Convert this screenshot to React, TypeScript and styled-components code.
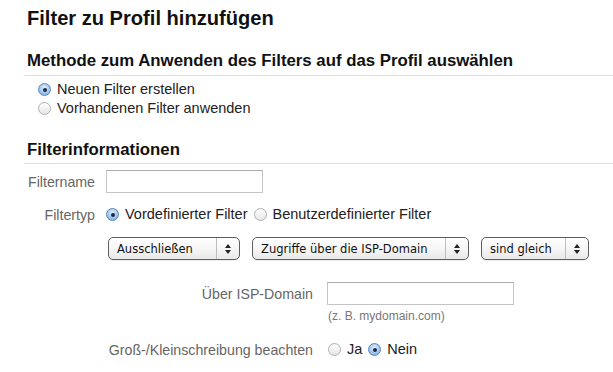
import React from "react";
import styled, { createGlobalStyle } from "styled-components";

const Global = createGlobalStyle`
  html, body { margin: 0; padding: 0; background: #fff; }
  body { font-family: "Liberation Sans", Arial, sans-serif; color: #222; }
`;

const Page = styled.div`
  width: 613px;
  height: 372px;
  overflow: hidden;
  padding: 7px 0 0 24px;
  box-sizing: border-box;
`;

const Title = styled.h1`
  margin: 0 0 0 3px;
  font-size: 20.1px;
  font-weight: bold;
  line-height: 22px;
  color: #111;
`;

const SectionHead = styled.h2<{ $top: number; $pb: number }>`
  margin: ${(p) => p.$top}px 0 0 0;
  padding: 0 0 ${(p) => p.$pb}px 3px;
  font-size: 16.8px;
  font-weight: bold;
  line-height: 20px;
  color: #111;
  border-bottom: 1px solid #dcdcdc;
`;

const RadioList = styled.div`
  display: flex;
  flex-direction: column;
  align-items: flex-start;
  gap: 2px;
  padding: 5px 0 0 14px;
`;

const RadioLabel = styled.label`
  display: inline-flex;
  align-items: center;
  gap: 6px;
  font-size: 14.5px;
  line-height: 17px;
  color: #222;
  margin-right: 6px;
`;

const Circle = styled.span<{ $on?: boolean }>`
  width: 13px;
  height: 13px;
  flex: none;
  border-radius: 50%;
  box-sizing: border-box;
  display: inline-flex;
  align-items: center;
  justify-content: center;
  border: 1px solid ${(p) => (p.$on ? "#5a86c0" : "#b0b0b0")};
  background: ${(p) =>
    p.$on
      ? "radial-gradient(circle at 50% 35%, #e4f0ff 0%, #9cc2ee 60%, #6d9fdc 100%)"
      : "linear-gradient(#ffffff, #e6e6e6)"};
  &::after {
    content: "";
    display: ${(p) => (p.$on ? "block" : "none")};
    width: 4px;
    height: 4px;
    border-radius: 50%;
    background: #1a2a40;
  }
`;

const Radio = ({ on, children }: { on?: boolean; children: React.ReactNode }) => (
  <RadioLabel>
    <Circle $on={on} />
    {children}
  </RadioLabel>
);

const Form = styled.div`
  display: flex;
  flex-direction: column;
`;

const Row = styled.div<{ $top: number; $label: number; $gap: number }>`
  display: grid;
  grid-template-columns: ${(p) => p.$label}px auto;
  column-gap: ${(p) => p.$gap}px;
  align-items: center;
  margin-top: ${(p) => p.$top}px;
`;

const Label = styled.span`
  text-align: right;
  font-size: 14.2px;
  color: #666;
  line-height: 16px;
  white-space: nowrap;
`;

const TextInput = styled.div<{ $w: number }>`
  width: ${(p) => p.$w}px;
  height: 23px;
  box-sizing: border-box;
  border: 1px solid #c4c4c4;
  border-top-color: #aaaaaa;
  background: #fff;
`;

const Inline = styled.div`
  display: flex;
  align-items: center;
`;

const Selects = styled.div`
  display: flex;
  gap: 12px;
  margin: 14px 0 0 84px;
`;

const SelectBox = styled.div<{ $w: number }>`
  width: ${(p) => p.$w}px;
  height: 23px;
  box-sizing: border-box;
  border: 1px solid #5e5e5e;
  border-radius: 5px;
  background: linear-gradient(#ffffff 0%, #f6f6f6 50%, #e9e9e9 100%);
  box-shadow: 0 1px 0 rgba(0, 0, 0, 0.08);
  display: flex;
  align-items: center;
  font-family: "DejaVu Sans", Verdana, sans-serif;
  font-size: 11.5px;
  color: #111;
`;

const SelectText = styled.span`
  flex: 1;
  padding-left: 8px;
  white-space: nowrap;
  overflow: hidden;
`;

const SelectArrows = styled.span`
  width: 22px;
  height: 100%;
  border-left: 1px solid #bdbdbd;
  display: flex;
  align-items: center;
  justify-content: center;
`;

const Select = ({ w, children }: { w: number; children: React.ReactNode }) => (
  <SelectBox $w={w}>
    <SelectText>{children}</SelectText>
    <SelectArrows>
      <svg width="6" height="10" viewBox="0 0 6 10">
        <path d="M3 0 L6 4 H0 Z M0 6 H6 L3 10 Z" fill="#222" />
      </svg>
    </SelectArrows>
  </SelectBox>
);

const Hint = styled.div`
  margin: 4px 0 0 304px;
  font-size: 12px;
  color: #777;
  line-height: 14px;
`;

export default function App() {
  return (
    <>
      <Global />
      <Page>
        <Title>Filter zu Profil hinzufügen</Title>
        <SectionHead $top={22} $pb={4}>
          Methode zum Anwenden des Filters auf das Profil auswählen
        </SectionHead>
        <RadioList>
          <Radio on>Neuen Filter erstellen</Radio>
          <Radio>Vorhandenen Filter anwenden</Radio>
        </RadioList>
        <SectionHead $top={23} $pb={3}>
          Filterinformationen
        </SectionHead>
        <Form>
          <Row $top={6} $label={71} $gap={11}>
            <Label>Filtername</Label>
            <TextInput $w={157} />
          </Row>
          <Row $top={13} $label={71} $gap={11}>
            <Label>Filtertyp</Label>
            <Inline>
              <Radio on>Vordefinierter Filter</Radio>
              <Radio>Benutzerdefinierter Filter</Radio>
            </Inline>
          </Row>
          <Selects>
            <Select w={132}>Ausschließen</Select>
            <Select w={217}>Zugriffe über die ISP-Domain</Select>
            <Select w={108}>sind gleich</Select>
          </Selects>
          <Row $top={22} $label={289} $gap={14}>
            <Label>Über ISP-Domain</Label>
            <TextInput $w={187} />
          </Row>
          <Hint>(z. B. mydomain.com)</Hint>
          <Row $top={18} $label={289} $gap={15}>
            <Label>Groß-/Kleinschreibung beachten</Label>
            <Inline>
              <Radio>Ja</Radio>
              <Radio on>Nein</Radio>
            </Inline>
          </Row>
        </Form>
      </Page>
    </>
  );
}
